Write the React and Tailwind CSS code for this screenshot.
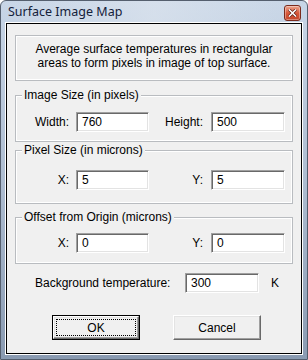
import React from "react";

const font = { fontFamily: '"Liberation Sans", Arial, sans-serif' };

function Field({ value, w = "w-[73px]" }) {
  return (
    <div
      className={`${w} h-[20px] bg-white border border-t-[#a0a0a0] border-l-[#a0a0a0] border-b-white border-r-white shadow-[inset_1px_1px_0_#696969,inset_-1px_-1px_0_#e3e3e3] flex items-center pl-[5px] text-[12px] text-black`}
    >
      {value}
    </div>
  );
}

function Group({ title, className, children }) {
  return (
    <div className={`relative border border-[#b9bcc0] shadow-[inset_0_0_0_1px_#ffffff] ${className}`}>
      <div className="absolute left-[6px] top-[-8px] bg-[#f0f0f0] px-[2px] leading-[14px] text-[12px] text-black">
        {title}
      </div>
      {children}
    </div>
  );
}

function Row({ l1, v1, l2, v2 }) {
  return (
    <div className="flex items-center h-[20px] text-[12px] text-black">
      <div className="w-[53px] text-right">{l1}</div>
      <div className="ml-[7px]">
        <Field value={v1} />
      </div>
      <div className="w-[54px] text-right">{l2}</div>
      <div className="ml-[8px]">
        <Field value={v2} w="w-[74px]" />
      </div>
    </div>
  );
}

const bevel =
  "border border-t-white border-l-white border-b-[#696969] border-r-[#696969] shadow-[inset_-1px_-1px_0_#a0a0a0,inset_1px_1px_0_#e3e3e3] bg-[#f0f0f0]";

function Btn({ label, def }) {
  if (def) {
    return (
      <div className="w-[88px] h-[25px] border border-black">
        <div className={`w-full h-full ${bevel} p-[2px]`}>
          <div className="w-full h-full border border-dotted border-black flex items-center justify-center text-[12px] text-black">
            {label}
          </div>
        </div>
      </div>
    );
  }
  return (
    <div className={`w-[88px] h-[25px] ${bevel} flex items-center justify-center text-[12px] text-black`}>
      {label}
    </div>
  );
}

export default function App() {
  return (
    <div
      className="w-[308px] h-[360px] border border-[#555f6e] rounded-t-[6px] bg-gradient-to-b from-[#c8d6e7] via-[#aebdd1] to-[#8a9bb2] flex flex-col overflow-hidden"
      style={font}
    >
      <div className="h-[22px] flex justify-between pl-[7px] pr-[6px] bg-gradient-to-r from-transparent via-[#dfe6ef]/60 to-transparent">
        <div
          className="text-[12.5px] leading-[20px] text-[#14213a] pt-[1px]"
          style={{ fontFamily: '"Noto Sans", "Open Sans", sans-serif' }}
        >
          Surface Image Map
        </div>
        <div className="mt-[4px] w-[17px] h-[16px] rounded-[3px] border border-[#7a2a1c] bg-gradient-to-b from-[#eba58f] via-[#d8583a] to-[#c4462a] flex items-center justify-center shadow-[inset_0_0_0_1px_rgba(255,255,255,0.35)]">
          <svg width="9" height="8" viewBox="0 0 9 8">
            <path d="M1 0.5 L8 7.5 M8 0.5 L1 7.5" stroke="#5a1a10" strokeWidth="3" />
            <path d="M1 0.5 L8 7.5 M8 0.5 L1 7.5" stroke="#ffffff" strokeWidth="1.6" />
          </svg>
        </div>
      </div>
      <div className="flex-1 mx-[5px] mb-[5px] border border-black shadow-[0_0_0_1px_#ffffff] bg-[#f0f0f0] px-[8px] flex flex-col">
        <div className="mt-[11px] h-[46px] border border-[#b9bcc0] shadow-[inset_0_0_0_1px_#ffffff] pt-[6px] text-center text-[12px] leading-[14px] text-black">
          <div>Average surface temperatures in rectangular</div>
          <div>areas to form pixels in image of top surface.</div>
        </div>

        <Group title="Image Size (in pixels)" className="mt-[14px] pt-[16px] pb-[9px]">
          <Row l1="Width:" v1="760" l2="Height:" v2="500" />
        </Group>

        <Group title="Pixel Size (in microns)" className="mt-[8px] pt-[19px] pb-[13px]">
          <Row l1="X:" v1="5" l2="Y:" v2="5" />
        </Group>

        <Group title="Offset from Origin (microns)" className="mt-[13px] pt-[15px] pb-[10px]">
          <Row l1="X:" v1="0" l2="Y:" v2="0" />
        </Group>

        <div className="mt-[9px] flex items-center h-[20px] pl-[20px] text-[12px] text-black">
          <div className="w-[150px]">Background temperature:</div>
          <Field value="300" w="w-[74px]" />
          <div className="ml-[12px]">K</div>
        </div>

        <div className="mt-[22px] flex pl-[37px] gap-[33px]">
          <Btn label="OK" def />
          <Btn label="Cancel" />
        </div>
      </div>
    </div>
  );
}
